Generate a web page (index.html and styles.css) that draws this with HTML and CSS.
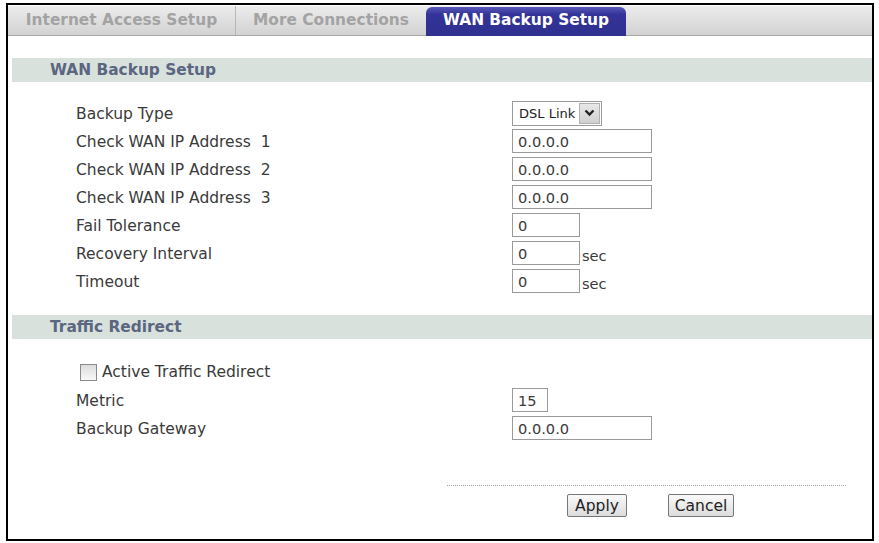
FILE: index.html
```html
<!DOCTYPE html>
<html lang="en">
<head>
    <meta charset="UTF-8">
    <title>WAN Backup Setup</title>
    <link rel="stylesheet" href="styles.css">
</head>
<body>
    <div class="frame">
        <!-- tabs -->
        <div class="tabbar">
            <div class="tab tab-first">Internet Access Setup</div>
            <div class="tab tab-second">More Connections</div>
            <div class="tab tab-active">WAN Backup Setup</div>
        </div>

        <div class="section-title">WAN Backup Setup</div>
        <div class="form form-backup">
            <div class="row">
                <span class="label">Backup Type</span>
                <span class="field">
                    <span class="select">
                        <span class="select-text">DSL Link</span>
                        <span class="select-arrow">
                            <svg width="11" height="8" viewBox="0 0 11 8"><path d="M1.5 1.5 L5.5 5.5 L9.5 1.5" fill="none" stroke="#222" stroke-width="2.4"/></svg>
                        </span>
                    </span>
                </span>
            </div>
            <div class="row">
                <span class="label">Check WAN IP Address&nbsp;&nbsp;1</span>
                <span class="field"><input class="text wide" type="text" value="0.0.0.0"></span>
            </div>
            <div class="row">
                <span class="label">Check WAN IP Address&nbsp;&nbsp;2</span>
                <span class="field"><input class="text wide" type="text" value="0.0.0.0"></span>
            </div>
            <div class="row">
                <span class="label">Check WAN IP Address&nbsp;&nbsp;3</span>
                <span class="field"><input class="text wide" type="text" value="0.0.0.0"></span>
            </div>
            <div class="row">
                <span class="label">Fail Tolerance</span>
                <span class="field"><input class="text short" type="text" value="0"></span>
            </div>
            <div class="row">
                <span class="label">Recovery Interval</span>
                <span class="field"><input class="text short" type="text" value="0"><span class="unit">sec</span></span>
            </div>
            <div class="row">
                <span class="label">Timeout</span>
                <span class="field"><input class="text short" type="text" value="0"><span class="unit">sec</span></span>
            </div>
        </div>

        <div class="section-title">Traffic Redirect</div>
        <div class="form form-redirect">
            <div class="row">
                <label class="check"><span class="checkbox"></span>Active Traffic Redirect</label>
            </div>
            <div class="row">
                <span class="label">Metric</span>
                <span class="field"><input class="text tiny" type="text" value="15"></span>
            </div>
            <div class="row">
                <span class="label">Backup Gateway</span>
                <span class="field"><input class="text wide" type="text" value="0.0.0.0"></span>
            </div>
        </div>

        <div class="actions">
            <button class="btn btn-apply">Apply</button>
            <button class="btn btn-cancel">Cancel</button>
        </div>
    </div>
</body>
</html>
```

FILE: styles.css
```css
body {
    margin: 0;
    padding: 0;
    background: #fff;
    font-family: "DejaVu Sans", Verdana, sans-serif;
    font-size: 15.5px;
    color: #3a3a3a;
}
.frame {
    width: 864px;
    height: 534px;
    margin: 3px 0 0 6px;
    border: 2px solid #000;
    overflow: hidden;
}

/* tabs */
.tabbar {
    display: flex;
    height: 29px;
    margin-top: 1px;
    border-bottom: 1px solid #a8a8a8;
    background: linear-gradient(#ececec, #d2d2d2);
}
.tab {
    font-weight: bold;
    font-size: 15.4px;
    color: #a3a3a3;
    text-align: center;
    line-height: 29px;
    white-space: nowrap;
}
.tab-first {
    width: 227px;
    border-right: 1px solid #b8b8b8;
}
.tab-second {
    width: 190px;
}
.tab-active {
    width: 200px;
    margin-top: 1px;
    margin-bottom: -1px;
    line-height: 27px;
    color: #fff;
    background: linear-gradient(#5a5ab8, #33339a 25%, #30308f);
    border-radius: 6px 6px 0 0;
}

.section-title {
    margin: 22px 0 0 4px;
    height: 24px;
    line-height: 25px;
    padding-left: 38px;
    background: #d9e1dd;
    color: #5b6680;
    font-weight: bold;
    font-size: 15.4px;
}
.form-backup {
    padding: 17px 0 0 68px;
}
.form-backup + .section-title {
    margin-top: 20px;
}
.form-redirect {
    padding: 19px 0 0 68px;
}
.row {
    display: grid;
    grid-template-columns: 436px 1fr;
    align-items: center;
    height: 28px;
}
.label {
    white-space: nowrap;
    padding-top: 2px;
}
.field {
    display: flex;
    align-items: flex-end;
}
.text {
    box-sizing: border-box;
    height: 24px;
    border: 1px solid #9a9a9a;
    padding: 0 0 0 5px;
    font-family: "DejaVu Sans", Verdana, sans-serif;
    font-size: 14.6px;
    color: #3a3a3a;
}
.wide { width: 140px; }
.short { width: 68px; }
.tiny { width: 36px; }
.unit {
    margin-left: 2px;
    line-height: 18px;
    font-size: 14.6px;
}

.select {
    display: inline-flex;
    align-items: center;
    box-sizing: border-box;
    width: 90px;
    height: 25px;
    border: 1px solid #9a9a9a;
    padding: 1px;
    font-size: 13px;
}
.select-text {
    flex: 1;
    padding-left: 5px;
    color: #222;
}
.select-arrow {
    display: flex;
    align-items: center;
    justify-content: center;
    width: 21px;
    height: 21px;
    box-sizing: border-box;
    border: 1px solid #b0b0b0;
    background: linear-gradient(#e8e8e8, #cfcfcf);
}

.check {
    grid-column: 1 / 3;
    display: flex;
    align-items: center;
    padding-left: 4px;
}
.checkbox {
    width: 15px;
    height: 15px;
    border: 1px solid #8a8a8a;
    background: linear-gradient(#dcdcdc, #f8f8f8);
    margin-right: 5px;
}

.actions {
    margin: 43px 0 0 439px;
    width: 399px;
    border-top: 1px dotted #a0a0a0;
    padding: 8px 0 0 120px;
    box-sizing: border-box;
    display: flex;
    gap: 41px;
}
.btn {
    height: 23px;
    padding: 0;
    font-family: "DejaVu Sans", Verdana, sans-serif;
    font-size: 15.5px;
    color: #222;
    border: 1px solid #777;
    border-radius: 2px;
    background: linear-gradient(#fafafa, #dcdcdc);
}
.btn-apply { width: 60px; }
.btn-cancel { width: 66px; }
```
